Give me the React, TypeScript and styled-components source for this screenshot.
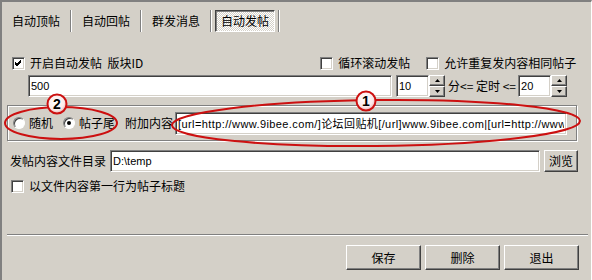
import styled, { createGlobalStyle } from "styled-components"

const GlobalStyle = createGlobalStyle`
    html, body {
        margin: 0;
        padding: 0;
        background: #d4d0c8;
    }
    * {
        box-sizing: border-box;
    }
`

const cjk = `"Noto Sans CJK SC", "Liberation Sans", sans-serif`
const latin = `"Liberation Sans", "Noto Sans CJK SC", sans-serif`

const Frame = styled.div`
    position: relative;
    width: 592px;
    height: 280px;
    background: #d4d0c8;
    border-top: 2px solid #808080;
    border-left: 2px solid #808080;
    border-right: 1px solid #ffffff;
    box-shadow: inset -1px 0 0 #d4d0c8;
    display: flex;
    flex-direction: column;
    font-family: ${cjk};
    font-size: 12px;
    color: #000;
    overflow: hidden;
`

const TabBar = styled.div`
    display: flex;
    align-items: center;
    margin-top: 8px;
    padding-left: 3px;
    height: 22px;
`

const Tab = styled.div<{ $active?: boolean }>`
    width: ${p => (p.$active ? 60 : 62)}px;
    height: 22px;
    display: flex;
    align-items: center;
    justify-content: center;
    line-height: 14px;
    border: 1px solid;
    border-color: ${p => (p.$active ? "#404040 #ffffff #ffffff #404040" : "transparent")};
    box-shadow: ${p => (p.$active ? "inset 1px 1px 0 #808080" : "none")};
    background: ${p =>
        p.$active ? "repeating-conic-gradient(#ffffff 0 25%, #d4d0c8 0 50%) 0 0 / 2px 2px" : "transparent"};
`

const TabSep = styled.div`
    width: 2px;
    height: 22px;
    margin: 0 3px;
    border-left: 1px solid #808080;
    border-right: 1px solid #ffffff;
`

const Row = styled.div<{ $top: number; $indent: number }>`
    display: flex;
    align-items: center;
    margin-top: ${p => p.$top}px;
    padding-left: ${p => p.$indent}px;
    white-space: nowrap;
`

const Label = styled.span<{ $gap?: number }>`
    line-height: 14px;
    margin-left: ${p => p.$gap ?? 0}px;
`

const Check = styled.span`
    width: 13px;
    height: 13px;
    flex: none;
    background: #fff;
    border: 1px solid;
    border-color: #808080 #ffffff #ffffff #808080;
    box-shadow: inset 1px 1px 0 #404040, inset -1px -1px 0 #d4d0c8;
    display: flex;
    align-items: center;
    justify-content: center;
`

const CheckItem = styled.label<{ $at?: number }>`
    display: flex;
    align-items: center;
    gap: 5px;
    margin-left: ${p => p.$at ?? 0}px;
`

const CheckBox = ({ checked }: { checked?: boolean }) => (
    <Check>
        {checked && (
            <svg width="7" height="7" viewBox="0 0 7 7">
                <path d="M0 2 L2 4 L6 0 M0 3 L2 5 L6 1 M0 4 L2 6 L6 2" stroke="#000" strokeWidth="1" fill="none" shapeRendering="crispEdges" />
            </svg>
        )}
    </Check>
)

const Field = styled.input<{ $w: number; $h?: number; $spacing?: number }>`
    width: ${p => p.$w}px;
    height: ${p => p.$h ?? 22}px;
    flex: none;
    margin: 0;
    padding: 0 2px;
    background: #fff;
    border: 1px solid;
    border-color: #808080 #ffffff #ffffff #808080;
    box-shadow: inset 1px 1px 0 #404040, inset -1px -1px 0 #d4d0c8;
    font-family: ${latin};
    font-size: 11px;
    letter-spacing: ${p => p.$spacing ?? 0}px;
    color: #000;
    outline: none;
`

const SpinWrap = styled.div`
    display: flex;
    align-items: stretch;
    height: 22px;
`

const SpinButtons = styled.div`
    display: flex;
    flex-direction: column;
    width: 16px;
`

const SpinBtn = styled.div`
    flex: 1;
    display: flex;
    align-items: center;
    justify-content: center;
    background: #d4d0c8;
    border: 1px solid;
    border-color: #ffffff #404040 #404040 #ffffff;
    box-shadow: inset -1px -1px 0 #808080;
`

const Arrow = ({ up }: { up?: boolean }) => (
    <svg width="5" height="3" viewBox="0 0 5 3">
        <path d={up ? "M2.5 0 L5 3 L0 3 Z" : "M0 0 L5 0 L2.5 3 Z"} fill="#000" />
    </svg>
)

const Spin = ({ value }: { value: string }) => (
    <SpinWrap>
        <Field $w={33} value={value} readOnly />
        <SpinButtons>
            <SpinBtn><Arrow up /></SpinBtn>
            <SpinBtn><Arrow /></SpinBtn>
        </SpinButtons>
    </SpinWrap>
)

const Group = styled.div`
    margin-top: 8px;
    margin-left: 5px;
    width: 570px;
    height: 36px;
    border: 1px solid #808080;
    box-shadow: inset 1px 1px 0 #ffffff, 1px 1px 0 #ffffff;
    display: flex;
    align-items: center;
    padding: 0 0 0 5px;
    white-space: nowrap;
`

const Radio = styled.span<{ $on?: boolean }>`
    width: 12px;
    height: 12px;
    flex: none;
    border-radius: 50%;
    background: #fff;
    border: 1px solid;
    border-color: #808080 #ffffff #ffffff #808080;
    box-shadow: inset 1px 1px 0 #404040;
    display: flex;
    align-items: center;
    justify-content: center;
    &::after {
        content: "";
        display: ${p => (p.$on ? "block" : "none")};
        width: 4px;
        height: 4px;
        border-radius: 50%;
        background: #000;
    }
`

const RadioItem = styled.label<{ $at?: number }>`
    display: flex;
    align-items: center;
    gap: 4px;
    margin-left: ${p => p.$at ?? 0}px;
`

const Button = styled.button<{ $w: number; $h: number }>`
    width: ${p => p.$w}px;
    height: ${p => p.$h}px;
    flex: none;
    margin: 0;
    padding: 0;
    background: #d4d0c8;
    border: 1px solid;
    border-color: #ffffff #404040 #404040 #ffffff;
    box-shadow: inset -1px -1px 0 #808080;
    font-family: ${cjk};
    font-size: 12px;
    line-height: 14px;
    color: #000;
`

const Divider = styled.div`
    margin-top: 41px;
    margin-left: 5px;
    width: 581px;
    height: 2px;
    border-top: 1px solid #808080;
    border-bottom: 1px solid #ffffff;
`

const Footer = styled.div`
    display: flex;
    justify-content: flex-end;
    gap: 4px;
    margin-top: 9px;
    padding-right: 12px;
`

const Overlay = styled.svg`
    position: absolute;
    left: -2px;
    top: -2px;
    pointer-events: none;
`

const Badge = ({ x, y, n }: { x: number; y: number; n: string }) => (
    <g>
        <circle cx={x} cy={y} r="9.5" fill="url(#badge)" stroke="#cc1010" strokeWidth="2" />
        <text x={x} y={y + 5} textAnchor="middle" fontFamily="Liberation Sans, sans-serif" fontWeight="bold" fontSize="14" fill="#000">{n}</text>
    </g>
)

const App = () => {
    return <Frame>
        <GlobalStyle />
        <TabBar>
            <Tab>自动顶帖</Tab>
            <TabSep />
            <Tab>自动回帖</Tab>
            <TabSep />
            <Tab>群发消息</Tab>
            <TabSep />
            <Tab $active>自动发帖</Tab>
            <TabSep />
        </TabBar>

        <Row $top={24} $indent={10}>
            <CheckItem>
                <CheckBox checked />
                <Label>开启自动发帖 &nbsp;版块ID</Label>
            </CheckItem>
            <CheckItem $at={177}>
                <CheckBox />
                <Label>循环滚动发帖</Label>
            </CheckItem>
            <CheckItem $at={16}>
                <CheckBox />
                <Label>允许重复发内容相同帖子</Label>
            </CheckItem>
        </Row>

        <Row $top={5} $indent={26}>
            <Field $w={364} value="500" readOnly />
            <div style={{ width: 4 }} />
            <Spin value="10" />
            <Label $gap={3}>分&lt;= 定时 &lt;=</Label>
            <div style={{ width: 2 }} />
            <Spin value="20" />
        </Row>

        <Group>
            <RadioItem>
                <Radio />
                <Label>随机</Label>
            </RadioItem>
            <RadioItem $at={10}>
                <Radio $on />
                <Label>帖子尾</Label>
            </RadioItem>
            <Label $gap={10}>附加内容</Label>
            <Field $w={392} $h={23} $spacing={0.4} style={{ marginLeft: 2 }} value="[url=http://www.9ibee.com/]论坛回贴机[/url]www.9ibee.com|[url=http://www.9ibee.com/]" readOnly />
        </Group>

        <Row $top={9} $indent={8}>
            <Label>发帖内容文件目录</Label>
            <Field $w={430} style={{ marginLeft: 4 }} value="D:\temp" readOnly />
            <Button $w={34} $h={22} style={{ marginLeft: 4 }}>浏览</Button>
        </Row>

        <Row $top={7} $indent={9}>
            <CheckItem>
                <CheckBox />
                <Label>以文件内容第一行为帖子标题</Label>
            </CheckItem>
        </Row>

        <Divider />

        <Footer>
            <Button $w={75} $h={25}>保存</Button>
            <Button $w={75} $h={25}>删除</Button>
            <Button $w={75} $h={25}>退出</Button>
        </Footer>

        <Overlay width="592" height="280" viewBox="0 0 592 280">
            <defs>
                <radialGradient id="badge" cx="45%" cy="40%" r="60%">
                    <stop offset="0%" stopColor="#ffffff" />
                    <stop offset="70%" stopColor="#fbeaea" />
                    <stop offset="100%" stopColor="#e8b0b0" />
                </radialGradient>
            </defs>
            <ellipse cx="376" cy="123" rx="204" ry="23" fill="none" stroke="#cc1010" strokeWidth="2" transform="rotate(-0.6 376 123)" />
            <ellipse cx="61" cy="123" rx="56" ry="16" fill="none" stroke="#cc1010" strokeWidth="2" />
            <Badge x={366} y={101} n="1" />
            <Badge x={57} y={104} n="2" />
        </Overlay>
    </Frame>
}

export default App
